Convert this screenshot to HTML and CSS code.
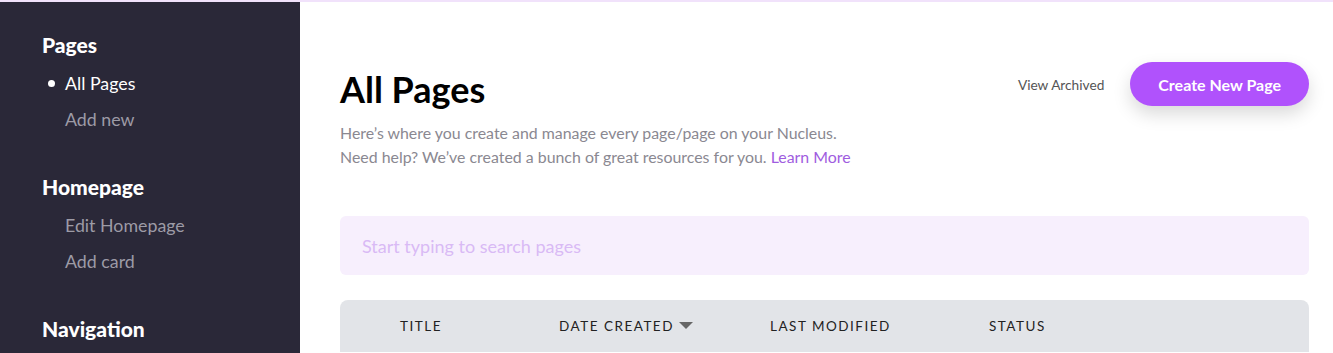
FILE: index.html
```html
<!DOCTYPE HTML>
<html lang="en">
<head>
    <title>All Pages - Nucleus</title>
    <link rel="stylesheet" href="styles.css">
</head>
<body>

<div class="top-bar"></div>
<div class="app">
    <aside class="sidebar">
        <div class="nav-group">
            <h2 class="nav-title">Pages</h2>
            <a class="nav-link active" href="#">All Pages</a>
            <a class="nav-link" href="#">Add new</a>
        </div>
        <div class="nav-group">
            <h2 class="nav-title">Homepage</h2>
            <a class="nav-link" href="#">Edit Homepage</a>
            <a class="nav-link" href="#">Add card</a>
        </div>
        <div class="nav-group">
            <h2 class="nav-title">Navigation</h2>
        </div>
    </aside>

    <main class="content">
        <div class="page-header">
            <div class="page-intro">
                <h1 class="page-title">All Pages</h1>
                <p class="page-description">
                    Here’s where you create and manage every page/page on your Nucleus.<br>
                    Need help? We’ve created a bunch of great resources for you. <a href="#" class="learn-more">Learn More</a>
                </p>
            </div>
            <div class="page-actions">
                <a href="#" class="view-archived">View Archived</a>
                <button class="create-button">Create New Page</button>
            </div>
        </div>

        <input type="text" class="search-input" placeholder="Start typing to search pages">

        <div class="table-head">
            <span class="col col-title">Title</span>
            <span class="col col-created">Date Created <span class="sort-arrow"></span></span>
            <span class="col col-modified">Last Modified</span>
            <span class="col col-status">Status</span>
        </div>
    </main>
</div>

</body>
</html>
```

FILE: styles.css
```css
:root {
    --primary-color: #b052fc;
    --sidebar-color: #2a2838;
    --text-muted: #8a8891;
    --border-radius: 8px;
}

* {
    box-sizing: border-box;
}

body {
    margin: 0;
    background-color: white;
    font-family: 'Lato', 'Noto Sans', sans-serif;
    overflow: hidden;
}

.top-bar {
    height: 2px;
    background-color: #f1e2fb;
}

.app {
    display: flex;
    height: 351px;
    overflow: hidden;
}

/* Sidebar */
.sidebar {
    width: 300px;
    flex-shrink: 0;
    background-color: var(--sidebar-color);
    padding: 31px 0 0 42px;
}

.nav-group {
    display: flex;
    flex-direction: column;
    margin-bottom: 38px;
}

.nav-title {
    margin: 0 0 8px;
    font-size: 21px;
    font-weight: 900;
    color: white;
    line-height: 24px;
}

.nav-link {
    position: relative;
    padding-left: 23px;
    font-size: 17.8px;
    line-height: 36px;
    color: #9d9ba6;
    text-decoration: none;
}

.nav-link.active {
    color: white;
}

.nav-link.active::before {
    content: '';
    position: absolute;
    left: 6px;
    top: 15px;
    width: 7px;
    height: 7px;
    border-radius: 50%;
    background-color: white;
}

/* Main content */
.content {
    flex: 1;
    padding: 60px 24px 0 40px;
}

.page-header {
    display: flex;
    justify-content: space-between;
    align-items: flex-start;
}

.page-title {
    margin: 8px 0 13px;
    font-size: 36px;
    font-weight: 700;
    color: black;
    line-height: 38px;
}

.page-description {
    margin: 0;
    font-size: 15.9px;
    line-height: 24px;
    color: var(--text-muted);
}

.learn-more {
    color: #a05ce0;
    text-decoration: none;
}

.page-actions {
    display: flex;
    align-items: center;
    gap: 26px;
}

.view-archived {
    font-size: 13.7px;
    color: #555;
    text-decoration: none;
}

.create-button {
    height: 44px;
    padding: 0 28px;
    border: none;
    border-radius: 22px;
    background-color: var(--primary-color);
    color: white;
    font-family: inherit;
    font-size: 16px;
    font-weight: 700;
    box-shadow: 0 8px 18px rgba(0, 0, 0, 0.15);
}

.search-input {
    display: block;
    width: 100%;
    height: 59px;
    margin-top: 47px;
    padding: 0 22px;
    border: none;
    border-radius: 6px;
    background-color: #f7effd;
    font-family: inherit;
    font-size: 18px;
    outline: none;
}

.search-input::placeholder {
    color: #d9baf5;
}

.table-head {
    display: flex;
    align-items: center;
    height: 52px;
    margin-top: 25px;
    padding-left: 60px;
    border-radius: var(--border-radius) var(--border-radius) 0 0;
    background-color: #e2e4e8;
}

.col {
    font-size: 13.5px;
    letter-spacing: 1.5px;
    text-transform: uppercase;
    color: #222;
}

.col-title { width: 159px; }
.col-created { width: 211px; }
.col-modified { width: 219px; }

.sort-arrow {
    display: inline-block;
    margin-left: 0;
    border-left: 7px solid transparent;
    border-right: 7px solid transparent;
    border-top: 7px solid #666;
    vertical-align: 2px;
}
```
